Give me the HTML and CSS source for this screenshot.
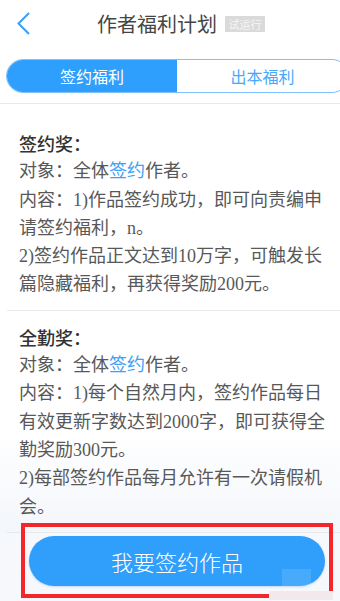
FILE: index.html
```html
<!DOCTYPE html>
<html lang="zh">
<head>
<meta charset="utf-8">
<link rel="stylesheet" href="styles.css">
</head>
<body>
<div class="page">
  <header class="header">
    <svg class="back" width="14" height="24" viewBox="0 0 14 24"><polyline points="12,1 1.5,11.5 12,22" fill="none" stroke="#3b9ff3" stroke-width="2"/></svg>
    <h1 class="title">作者福利计划</h1>
    <span class="badge">试运行</span>
  </header>
  <div class="tabs">
    <div class="tab active">签约福利</div>
    <div class="tab">出本福利</div>
  </div>
  <div class="rule full"></div>
  <div class="content">
    <section class="sec first">
      <p class="head">签约奖：</p>
      <p>对象：全体<span class="link">签约</span>作者。</p>
      <p>内容：1)作品签约成功，即可向责编申请签约福利，n。</p>
      <p>2)签约作品正文达到10万字，可触发长篇隐藏福利，再获得奖励200元。</p>
    </section>
    <div class="rule inset"></div>
    <section class="sec last">
      <p class="head">全勤奖：</p>
      <p>对象：全体<span class="link">签约</span>作者。</p>
      <p>内容：1)每个自然月内，签约作品每日有效更新字数达到2000字，即可获得全勤奖励300元。</p>
      <p>2)每部签约作品每月允许有一次请假机会。</p>
    </section>
  </div>
  <div class="bar">
    <div class="rule inset"></div>
    <button class="cta">我要签约作品</button>
    <div class="mark"></div>
    <div class="annot"></div>
    <div class="annot-cover"></div>
  </div>
</div>
</body>
</html>
```
FILE: styles.css
```css
html, body {
  margin: 0;
  padding: 0;
  background: #fff;
}
.page {
  width: 340px;
  height: 601px;
  overflow: hidden;
  display: flex;
  flex-direction: column;
  font-family: "Liberation Serif", "Noto Sans CJK SC", serif;
  position: relative;
}
.header {
  height: 47px;
  display: flex;
  align-items: center;
}
.back {
  margin-left: 17px;
}
.title {
  margin: 0 0 0 66px;
  font-family: "Noto Sans CJK SC", sans-serif;
  font-weight: 400;
  font-size: 20px;
  color: #454545;
  line-height: 24px;
}
.badge {
  margin-left: 8px;
  width: 40px;
  height: 16px;
  background: #dadada;
  color: #f6f6f6;
  font-family: "Noto Sans CJK SC", sans-serif;
  font-size: 11px;
  line-height: 16px;
  text-align: center;
  margin-top: 1px;
}
.tabs {
  margin: 12px 0 0 6px;
  display: flex;
  height: 34px;
  width: 343px;
  box-sizing: border-box;
  border: 1.5px solid #7fc1ff;
  border-radius: 17px;
  overflow: hidden;
}
.tab {
  display: flex;
  align-items: center;
  justify-content: center;
  font-family: "Noto Sans CJK SC", sans-serif;
  font-size: 16px;
  color: #4aa8fb;
  flex: 1;
}
.tab.active {
  flex: 0 0 170px;
  background: #2e9ffc;
  color: #fff;
}
.rule {
  height: 1px;
  background: #e6e9ee;
  flex: none;
}
.rule.full {
  margin-top: 10px;
}
.rule.inset {
  margin-left: 7px;
}
.content {
  flex: none;
}
.sec {
  padding: 12px 9px 11px 19px;
  font-size: 18px;
  line-height: 28.3px;
  color: #585858;
}
.sec.first {
  padding-top: 25px;
}
.sec.last {
  background: linear-gradient(#fff 55%, #f3f6fb);
}
.sec p {
  margin: 0;
}
.sec .head {
  font-family: "Noto Sans CJK SC", sans-serif;
  font-weight: 500;
  color: #333;
}
.link {
  color: #3fa1f6;
}
.bar {
  position: relative;
  flex: 1;
  background: #f6f8fc;
  display: flex;
  flex-direction: column;
}
.cta {
  margin: 3px 0 0 29px;
  width: 296px;
  height: 50px;
  border: none;
  border-radius: 25px;
  background: #2f9ffb;
  color: #fff;
  font-family: "Noto Sans CJK SC", sans-serif;
  font-weight: 300;
  font-size: 22px;
  padding: 0;
  box-shadow: 0 1px 2px rgba(60,120,200,0.25);
}
.mark {
  position: absolute;
  left: 282px;
  top: 37px;
  width: 29px;
  height: 17px;
  background: rgba(255,255,255,0.12);
}
.annot {
  position: absolute;
  left: 21px;
  top: -9px;
  width: 312px;
  height: 75px;
  box-sizing: border-box;
  border: 4px solid #f2262b;
}
.annot-cover {
  position: absolute;
  left: 269px;
  top: 59px;
  width: 64px;
  height: 9px;
  background: #f3e9ea;
}
```
